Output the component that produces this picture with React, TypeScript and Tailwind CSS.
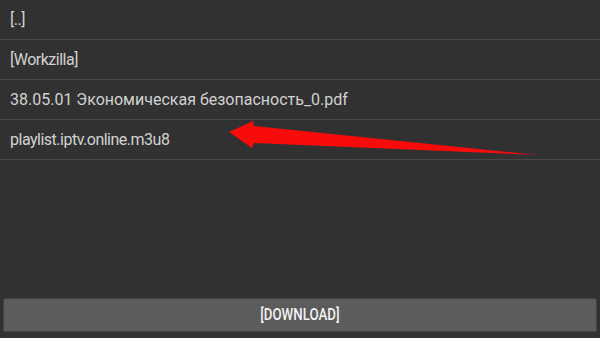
// строки списка файлов; латиница в оригинале чуть уже, чем Roboto
const ROWS = [
    { name: "[..]", tight: true },
    { name: "[Workzilla]", tight: true },
    { name: "38.05.01 Экономическая безопасность_0.pdf", tight: false },
    { name: "playlist.iptv.online.m3u8", tight: true },
]

export default function App() {
    return (
        <div className="relative flex h-[338px] w-[600px] flex-col bg-[#313131] font-['Roboto',sans-serif]">
            <ul className="flex flex-col">
                {ROWS.map((r) => (
                    <li
                        key={r.name}
                        className={`flex h-[40px] items-center border-b-[1.5px] border-[#474747] pl-[10px] text-[16px] text-[#d2d2d2] ${r.tight ? "tracking-[-0.5px]" : ""}`}
                    >
                        {r.name}
                    </li>
                ))}
            </ul>
            <div className="flex-1" />
            <div className="px-[3px] pb-[6px]">
                <button className="flex h-[34px] w-full items-center justify-center rounded-[2px] border border-[#444] bg-[#5c5c5c] text-[16px] font-medium text-[#f2f2f2]">
                    <span className="inline-block scale-x-[0.83]">[DOWNLOAD]</span>
                </button>
            </div>

            {/* красная стрелка поверх списка */}
            <svg className="pointer-events-none absolute left-0 top-0" width="600" height="338" aria-hidden>
                <polygon points="229,132 253,121 254,126 537,155 254,143 252,148" fill="#f80b0b" />
            </svg>
        </div>
    )
}
